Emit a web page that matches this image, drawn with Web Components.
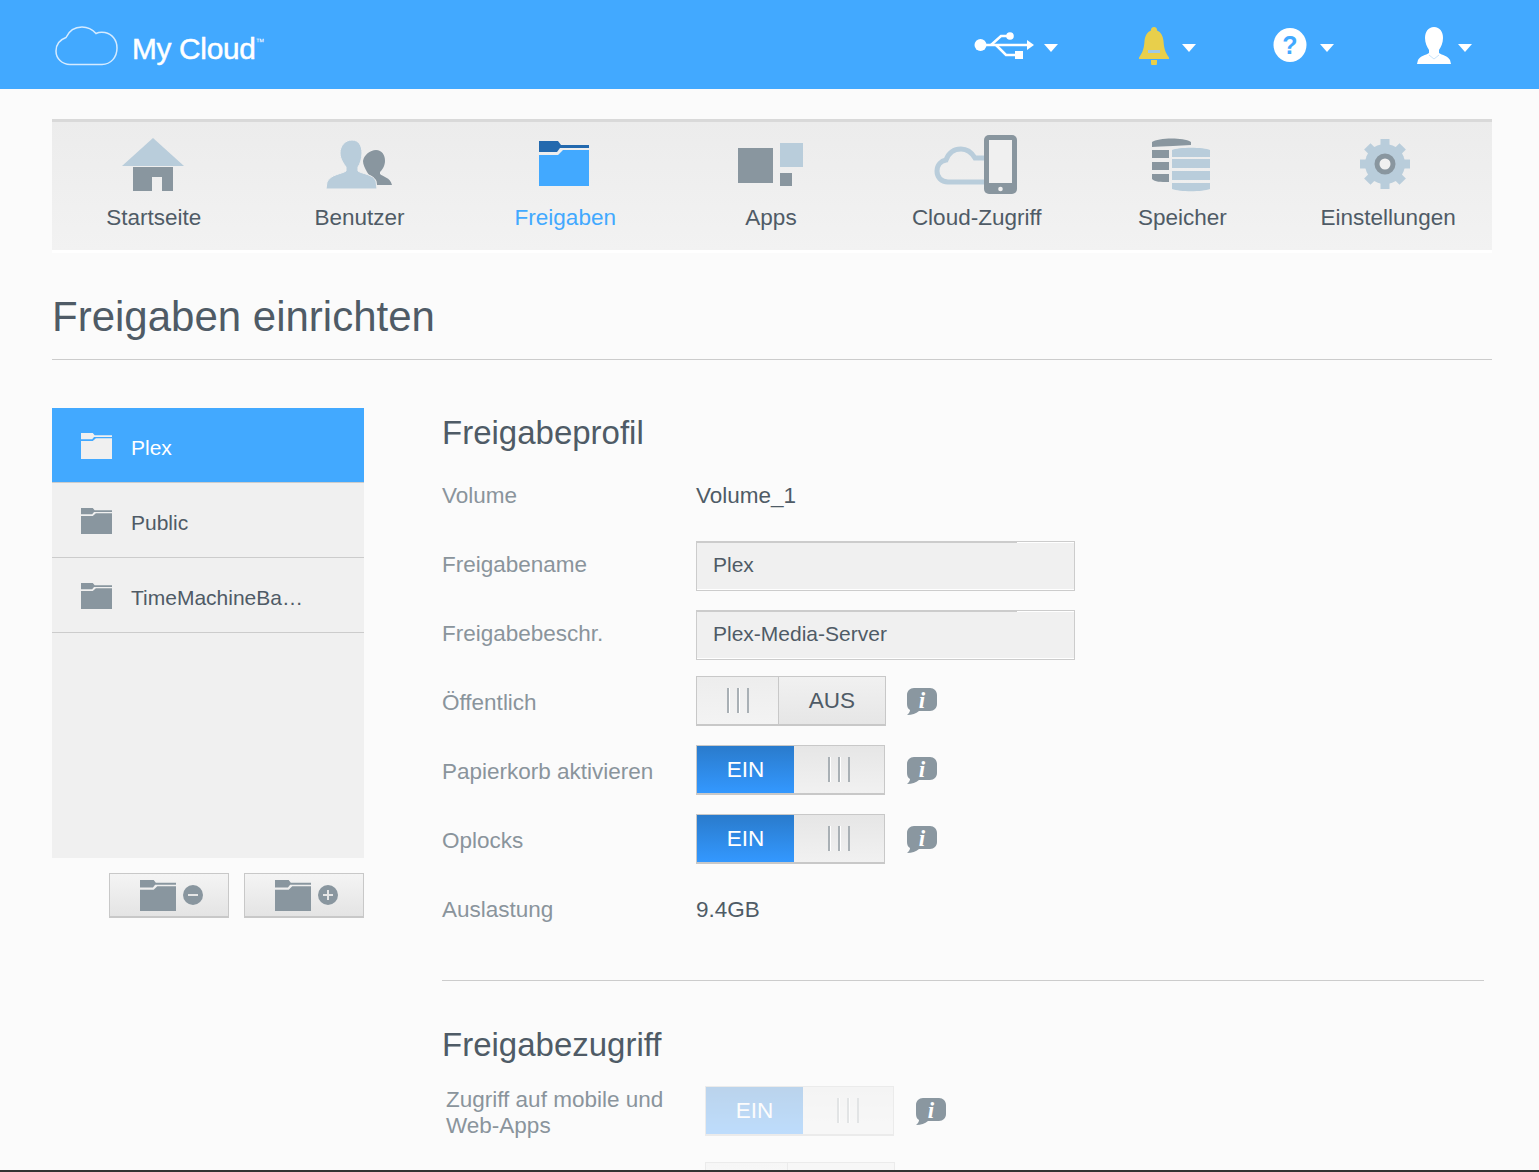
<!DOCTYPE html>
<html>
<head>
<meta charset="utf-8">
<title>My Cloud</title>
<style>
  html, body { margin: 0; height: 100%; }
  body { background: #fbfbfb; font-family: "Liberation Sans", Arial, sans-serif; color: #4f5b66; }
  my-page { height: 100vh; }
</style>
</head>
<body>
<my-page>
  <top-bar slot="top"></top-bar>
  <main-nav slot="top">
    <nav-item icon="home" label="Startseite"></nav-item>
    <nav-item icon="users" label="Benutzer"></nav-item>
    <nav-item icon="shares" label="Freigaben" active></nav-item>
    <nav-item icon="apps" label="Apps"></nav-item>
    <nav-item icon="cloud" label="Cloud-Zugriff"></nav-item>
    <nav-item icon="storage" label="Speicher"></nav-item>
    <nav-item icon="gear" label="Einstellungen"></nav-item>
  </main-nav>
  <page-title>Freigaben einrichten</page-title>
  <share-list slot="side">
    <share-item active>Plex</share-item>
    <share-item>Public</share-item>
    <share-item>TimeMachineBa…</share-item>
  </share-list>
  <section-head>Freigabeprofil</section-head>
  <form-row label="Volume">Volume_1</form-row>
  <form-row label="Freigabename"><text-box>Plex</text-box></form-row>
  <form-row label="Freigabebeschr."><text-box>Plex-Media-Server</text-box></form-row>
  <form-row label="Öffentlich"><on-off></on-off><info-tip></info-tip></form-row>
  <form-row label="Papierkorb aktivieren"><on-off on></on-off><info-tip></info-tip></form-row>
  <form-row label="Oplocks"><on-off on></on-off><info-tip></info-tip></form-row>
  <form-row label="Auslastung">9.4GB</form-row>
  <section-head rule>Freigabezugriff</section-head>
  <access-row label="Zugriff auf mobile und Web-Apps"><on-off on dim></on-off><info-tip flat></info-tip></access-row>
  <access-row><on-off dim blank></on-off></access-row>
</my-page>

<script>
const ICONS = {
  usb: `<svg width="60" height="28" viewBox="0 0 60 28"><g fill="none" stroke="#fff" stroke-width="2.500"><path d="M6 13H55"/><path d="M17 13L27 4H33"/><path d="M22 13L32 23H42"/></g><g fill="#fff"><circle cx="6.500" cy="13" r="6"/><circle cx="36" cy="4" r="3.800"/><rect x="41" y="19" width="8" height="8"/><path d="M53 8L60 13L53 18Z"/></g></svg>`,
  bell: `<svg width="30" height="38" viewBox="0 0 30 38"><path fill="#e8cf4b" d="M15 0a3 3 0 0 1 3 3.500C22 5 24 9 24.500 14C25 21 26 25 30 30.500V32H0V30.500C4 25 5 21 5.500 14C6 9 8 5 12 3.500A3 3 0 0 1 15 0ZM12 33H18V36A3 3 0 0 1 12 36Z"/><rect x="9" y="23" width="12" height="3" fill="#9fc9e8"/></svg>`,
  help: `<svg style="margin-top:-2px" width="34" height="36" viewBox="0 0 34 36"><ellipse cx="17" cy="18" rx="16.500" ry="17" fill="#fff"/><text x="17" y="27" text-anchor="middle" font-family="Liberation Sans" font-weight="700" font-size="25" fill="#42a9ff">?</text></svg>`,
  person: `<svg width="34" height="38" viewBox="0 0 34 38"><path fill="#fff" d="M17 0C23 0 26 5 26 11C26 16 24 20 22 23V26C25 28 31 29 33 33L34 37H0L1 33C3 29 9 28 12 26V23C10 20 8 16 8 11C8 5 11 0 17 0Z"/><path fill="none" stroke="#b9dcf8" stroke-width=".8" d="M12 28L17 32L22 28"/></svg>`,
  home: `<svg width="62" height="54" viewBox="0 0 62 54"><path fill="#b9cddb" d="M31 0L62 28H0Z"/><path fill="#89969f" d="M11 29H51V53H40V39H30V53H11Z"/></svg>`,
  users: `<svg width="68" height="50" viewBox="0 0 68 50"><path fill="#89969f" d="M51 10C57 10 60 15 60 21C60 26 57 30 55 32V34C58 37 65 37 67 45H49C47 39 44 35 42 32C40 28 38 25 38 21C39 15 45 10 51 10Z"/><path fill="#b9cddb" stroke="#f0f0f0" stroke-width="1" d="M27 0C34 0 37 6 37 13C37 19 35 24 33 27V31C37 34 48 34 51 41L52 49H1L2 42C6 34 17 34 21 31V27C19 24 15 19 15 13C15 6 20 0 27 0Z"/></svg>`,
  shares: `<svg style="margin-top:-4px" width="50" height="45" viewBox="0 0 50 45"><path fill="#2369ae" d="M0 0H19L22 4H50V7H21L18 11H0Z"/><path fill="#42a9ff" d="M0 14H19L24 9H50V45H0Z"/></svg>`,
  apps: `<svg style="margin-left:2px" width="65" height="44" viewBox="0 0 65 44"><rect x="0" y="5" width="35" height="35" fill="#89969f"/><rect x="42" y="0" width="23" height="24" fill="#b9cddb"/><rect x="42" y="30" width="12" height="13" fill="#89969f"/></svg>`,
  cloud: `<svg width="84" height="60" viewBox="0 0 84 60"><path fill="none" stroke="#b9cddb" stroke-width="5" d="M52 47H14C7 47 3 42 3 36C3 30 7 26 12 25C15 17 21 14 27 14C33 14 38 18 41 23H52"/><rect x="50" y="0" width="33" height="59" rx="5" fill="#89969f"/><rect x="55" y="5" width="23" height="43" fill="#f0f0f0"/><circle cx="66.500" cy="54" r="2.300" fill="#f0f0f0"/></svg>`,
  storage: `<svg width="58" height="54" viewBox="0 0 58 54"><g fill="#89969f"><path d="M0 4C6 0 30 -1 39 4V7L21 8C12 8 5 9 0 9Z"/><rect x="0" y="12" width="17" height="8"/><rect x="0" y="24" width="17" height="8"/><path d="M0 36H17V44C8 44 3 44 0 41Z"/></g><g fill="#b9cddb"><path d="M20 12C26 9 52 9 58 12V19H20Z"/><rect x="20" y="21" width="38" height="9"/><rect x="20" y="33" width="38" height="9"/><path d="M20 45H58V51C50 54 28 54 20 51Z"/></g></svg>`,
  gear: `<svg style="margin:-3px 4px 0 0" width="50" height="50" viewBox="0 0 50 50"><g fill="#b9cddb"><circle cx="25" cy="25" r="20"/><rect x="20.500" y="0" width="9" height="50"/><rect x="20.500" y="0" width="9" height="50" transform="rotate(45 25 25)"/><rect x="20.500" y="0" width="9" height="50" transform="rotate(90 25 25)"/><rect x="20.500" y="0" width="9" height="50" transform="rotate(135 25 25)"/></g><circle cx="25" cy="25" r="8" fill="#f0f0f0" stroke="#89969f" stroke-width="5"/></svg>`
};

const folder = (w, h, tab, body) => `<svg width="${w}" height="${h}" viewBox="0 0 50 45" preserveAspectRatio="none"><path fill="${tab}" d="M0 0H19L22 4H50V7H21L18 11H0Z"/><path fill="${body}" d="M0 14H19L24 9H50V45H0Z"/></svg>`;

const grip = `<svg width="22" height="26" viewBox="0 0 22 26"><g fill="#a9b0b5"><rect x="0" width="2" height="25"/><rect x="10" width="2" height="25"/><rect x="20" width="2" height="25"/></g><g fill="#fff"><rect x="2" width="1" height="25"/><rect x="12" width="1" height="25"/></g></svg>`;

// shadow root helper, everything is open so the texts stay readable
function shadow(el, html) {
  el.attachShadow({ mode: 'open' }).innerHTML = html;
}

class MyPage extends HTMLElement {
  constructor() {
    super();
    shadow(this, `<style>
      :host { display: flex; flex-direction: column; overflow: hidden; box-sizing: border-box; border-bottom: 2px solid #333; }
      .wrap { flex: 1; min-height: 0; overflow: hidden; padding: 0 47px 0 52px; }
      .cols { display: flex; gap: 78px; margin-top: 48px; }
      .side { width: 312px; flex: none; }
      .body { width: 1042px; flex: none; }
    </style>
    <slot name="top-bar"></slot>
    <div class="wrap">
      <slot name="top"></slot>
      <slot name="title"></slot>
      <div class="cols">
        <div class="side"><slot name="side"></slot></div>
        <div class="body"><slot></slot></div>
      </div>
    </div>`);
  }
  connectedCallback() {
    this.querySelector('top-bar').slot = 'top-bar';
    this.querySelector('main-nav').slot = 'top';
    this.querySelector('page-title').slot = 'title';
  }
}

class TopBar extends HTMLElement {
  constructor() {
    super();
    const caret = `<i class="caret"></i>`;
    shadow(this, `<style>
      :host { display: flex; align-items: center; height: 89px; background: #42a9ff; padding: 0 67px 0 55px; color: #fff; }
      .logo { display: flex; align-items: center; gap: 13px; margin-right: auto; padding-top: 9px; }
      .logo svg { margin-top: -7px; }
      .name { font-size: 29.800px; letter-spacing: -.3px; -webkit-text-stroke: .5px #fff; }
      sup { font-size: 9px; vertical-align: 14px; line-height: 0; -webkit-text-stroke: 0; letter-spacing: 0; }
      .tool { display: flex; align-items: center; gap: 10px; margin-top: 3px; }
      .tool svg { display: block; }
      .caret { width: 0; height: 0; border: 7px solid transparent; border-top: 8px solid #fff; border-bottom: 0; margin-top: 3px; }
      .usb { margin-right: 81px; }
      .bell { margin-right: 77px; gap: 13px; }
      .help { margin-right: 83px; gap: 13px; }
      .person { gap: 7px; }
    </style>
    <div class="logo">
      <svg width="64" height="40" viewBox="0 0 64 40"><path fill="none" stroke="#d5ebff" stroke-width="1.500" d="M15 38.500C7 38.500 1 32.500 1 25C1 18 5.500 13.500 11 11.500C14 5 20 1 27 1C33 1 37.500 3.500 41 7.500C44 6 47 6 50 6.500C57 8 62 14 62 22C62 31 56 38.500 47 38.500Z"/></svg>
      <span class="name">My Cloud<sup>™</sup></span>
    </div>
    <div class="tool usb">${ICONS.usb}${caret}</div>
    <div class="tool bell">${ICONS.bell}${caret}</div>
    <div class="tool help">${ICONS.help}${caret}</div>
    <div class="tool person">${ICONS.person}${caret}</div>`);
  }
}

class MainNav extends HTMLElement {
  constructor() {
    super();
    shadow(this, `<style>
      :host { display: grid; grid-template-columns: repeat(7, 1fr); height: 128px; margin-top: 30px;
        border-top: 3px solid #d9d9d9; border-bottom: 3px solid #fff;
        background: linear-gradient(#ececec, #f2f2f2); }
    </style><slot></slot>`);
  }
}

class NavItem extends HTMLElement {
  constructor() {
    super();
    shadow(this, `<style>
      :host { display: flex; flex-direction: column; align-items: center; font-size: 22.500px; color: #4f5b66; }
      :host([active]) { color: #42a9ff; }
      .icon { height: 60px; margin: 13px 4px 0 0; display: flex; align-items: center; justify-content: center; }
      .label { margin: 10px 2px 0 0; line-height: 26px; }
      svg { display: block; }
    </style><div class="icon"></div><div class="label"></div>`);
  }
  connectedCallback() {
    this.shadowRoot.querySelector('.icon').innerHTML = ICONS[this.getAttribute('icon')];
    this.shadowRoot.querySelector('.label').textContent = this.getAttribute('label');
  }
}

class PageTitle extends HTMLElement {
  constructor() {
    super();
    shadow(this, `<style>
      :host { display: block; margin-top: 40px; padding-bottom: 18px; border-bottom: 1px solid #ccc;
        font-size: 42px; line-height: 48px; color: #4f5b66; }
    </style><slot></slot>`);
  }
}

class ShareList extends HTMLElement {
  constructor() {
    super();
    const btn = (sign) => `<div class="btn">${folder(36, 31, '#89969f', '#89969f')}<svg width="20" height="20" viewBox="0 0 20 20"><circle cx="10" cy="10" r="10" fill="#89969f"/><path stroke="#e6e6e6" stroke-width="2" d="${sign}"/></svg></div>`;
    shadow(this, `<style>
      :host { display: block; }
      .list { height: 450px; background: #f0f0f0; }
      .btns { display: flex; justify-content: flex-end; gap: 15px; margin-top: 15px; }
      .btn { box-sizing: border-box; width: 120px; height: 45px; padding-left: 4px; display: flex; align-items: center; justify-content: center; gap: 7px;
        border: 1px solid #c8c8c8; border-bottom-width: 2px; background: linear-gradient(#f4f4f4, #e4e4e4); }
      .btn svg { display: block; }
    </style>
    <div class="list"><slot></slot></div>
    <div class="btns">${btn('M5 10H15')}${btn('M5 10H15M10 5V15')}</div>`);
  }
}

class ShareItem extends HTMLElement {
  constructor() {
    super();
    shadow(this, `<style>
      :host { display: flex; align-items: center; gap: 19px; box-sizing: border-box; height: 75px; padding: 6px 0 0 29px;
        border-bottom: 1px solid #ccc; font-size: 21px; color: #4f5b66; }
      :host([active]) { background: #42a9ff; color: #fff; }
      svg { display: block; margin-top: -5px; }
    </style><span class="ic"></span><slot></slot>`);
  }
  connectedCallback() {
    const on = this.hasAttribute('active');
    this.shadowRoot.querySelector('.ic').innerHTML = on ? folder(31, 26, '#f0f0f0', '#f0f0f0') : folder(31, 26, '#89969f', '#89969f');
  }
}

class SectionHead extends HTMLElement {
  constructor() {
    super();
    shadow(this, `<style>
      :host { display: block; font-size: 33px; line-height: 48px; padding-top: 1px; margin-bottom: 4px; color: #4f5b66; }
      :host([rule]) { margin-top: 36px; border-top: 1px solid #ccc; padding-top: 40px; margin-bottom: 17px; }
    </style><slot></slot>`);
  }
}

class FormRow extends HTMLElement {
  constructor() {
    super();
    shadow(this, `<style>
      :host { display: flex; align-items: center; height: 69px; font-size: 22.500px; color: #4f5b66; }
      .label { width: 254px; flex: none; color: #8a949c; }
      .field { display: flex; align-items: center; gap: 21px; }
    </style><div class="label"></div><div class="field"><slot></slot></div>`);
  }
  connectedCallback() {
    this.shadowRoot.querySelector('.label').textContent = this.getAttribute('label');
  }
}

class AccessRow extends HTMLElement {
  constructor() {
    super();
    shadow(this, `<style>
      :host { display: flex; align-items: center; height: 50px; margin-bottom: 26px; padding-left: 4px; font-size: 22.500px; line-height: 26px; }
      .label { width: 259px; flex: none; margin-top: 4px; color: #8a949c; padding-right: 30px; box-sizing: border-box; }
      .field { display: flex; align-items: center; gap: 22px; }
    </style><div class="label"></div><div class="field"><slot></slot></div>`);
  }
  connectedCallback() {
    this.shadowRoot.querySelector('.label').textContent = this.getAttribute('label') || '';
  }
}

class TextBox extends HTMLElement {
  constructor() {
    super();
    shadow(this, `<style>
      :host { display: flex; align-items: center; box-sizing: border-box; width: 379px; height: 50px; padding: 0 16px 2px; margin-top: 3px;
        background: linear-gradient(90deg, #ccc 85%, #fff 85%) top / 100% 1px no-repeat, #f0f0f0;
        border: 1px solid #ccc; box-shadow: inset 0 -1px 0 #fff;
        font-size: 21px; color: #4f5b66; }
    </style><slot></slot>`);
  }
}

class OnOff extends HTMLElement {
  constructor() {
    super();
    shadow(this, `<style>
      :host { display: flex; box-sizing: border-box; width: 190px; height: 50px; margin-bottom: 3px;
        border: 1px solid #c8c8c8; border-bottom-width: 2px; border-right-width: 1px; font-size: 22.500px; }
      :host([on]) { width: 189px; margin-right: 1px; }
      :host([dim]) { opacity: .3; margin-bottom: 0; }
      :host([on][dim]) { margin-right: 0; }
      .grip, .txt { display: flex; align-items: center; justify-content: center; }
      .grip { background: linear-gradient(#ededed, #f3f3f3); }
      .txt { background: linear-gradient(#f1f1f1, #e6e6e6); color: #4f5b66; }
      svg { display: block; }
      .off-grip { width: 81px; border-right: 1px solid #c8c8c8; }
      .off-txt { flex: 1; }
      .on-txt { width: 97px; background: linear-gradient(#2a7bcc, #3398ff); color: #fff; }
      .on-grip { flex: 1; background: linear-gradient(#e6e6e6, #f1f1f1); }
    </style><div id="box" style="display:contents"></div>`);
  }
  connectedCallback() {
    // the last toggle is nearly all below the fold, so no label on it
    const word = this.hasAttribute('blank') ? '' : 'AUS';
    this.shadowRoot.getElementById('box').innerHTML = this.hasAttribute('on')
      ? `<div class="txt on-txt">EIN</div><div class="grip on-grip">${grip}</div>`
      : `<div class="grip off-grip">${grip}</div><div class="txt off-txt">${word}</div>`;
  }
}

class InfoTip extends HTMLElement {
  constructor() {
    super();
    shadow(this, `<style>
      :host { display: block; width: 30px; height: 27px; margin-bottom: 3px; }
      :host([flat]) { margin-bottom: 0; }
      svg { display: block; }
    </style><svg width="30" height="27" viewBox="0 0 30 27"><path fill="#8a97a0" d="M7 0H23C27 0 30 3 30 7V16C30 20 27 23 23 23H12C9 25.500 5 27 0 27C2 25 3 24 3 22C1 21 0 19 0 16V7C0 3 3 0 7 0Z"/><text x="15" y="20" text-anchor="middle" font-family="Liberation Serif" font-weight="700" font-style="italic" font-size="23" fill="#fff">i</text></svg>`);
  }
}

customElements.define('my-page', MyPage);
customElements.define('top-bar', TopBar);
customElements.define('main-nav', MainNav);
customElements.define('nav-item', NavItem);
customElements.define('page-title', PageTitle);
customElements.define('share-list', ShareList);
customElements.define('share-item', ShareItem);
customElements.define('section-head', SectionHead);
customElements.define('form-row', FormRow);
customElements.define('access-row', AccessRow);
customElements.define('text-box', TextBox);
customElements.define('on-off', OnOff);
customElements.define('info-tip', InfoTip);
</script>
</body>
</html>
